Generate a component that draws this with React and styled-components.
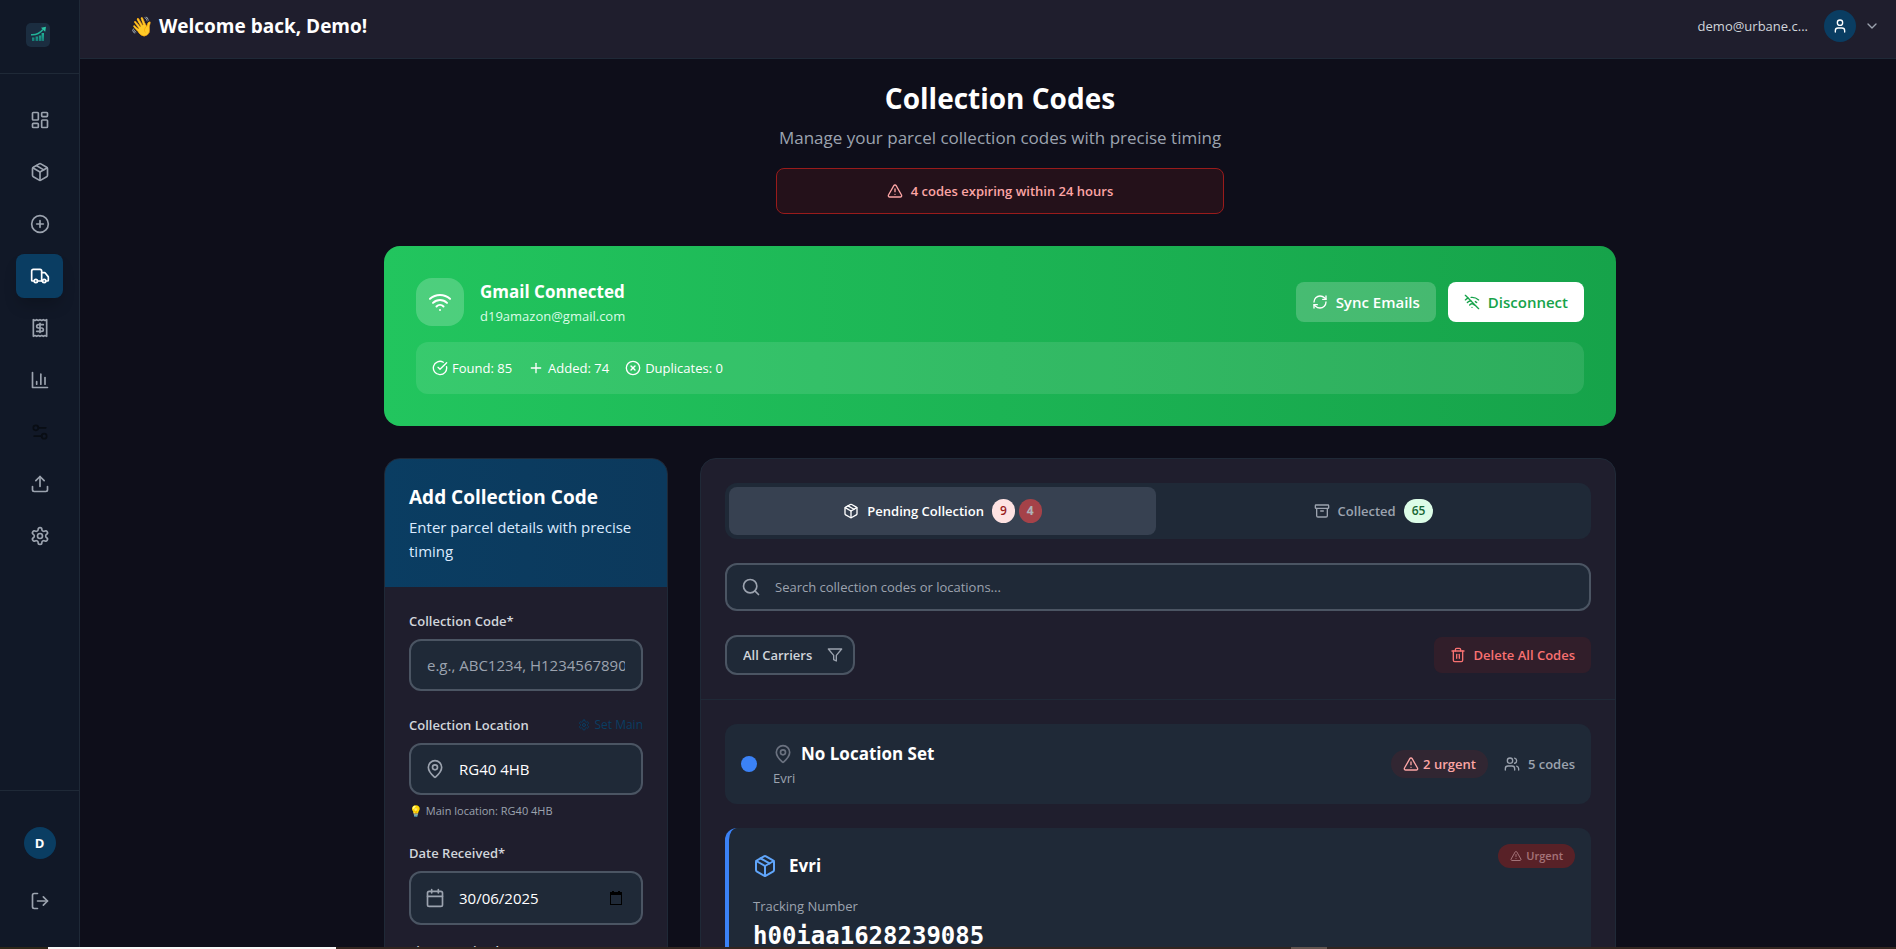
import React, { useState } from 'react';
import styled, { createGlobalStyle, css } from 'styled-components';
import {
  Archive,
  Calendar,
  ChevronDown,
  CircleCheckBig,
  CirclePlus,
  CircleX,
  LayoutDashboard,
  LogOut,
  MapPin,
  Package,
  Plus,
  Receipt,
  RefreshCw,
  Search,
  Settings2,
  Trash2,
  TriangleAlert,
  Truck,
  Upload,
  User,
  Users,
  Wifi,
  WifiOff,
} from 'lucide-react';

const colors = {
  page: '#0e0e1a',
  panel: '#1f1e2d',
  sidebar: '#111827',
  surface: '#1f2937',
  raised: '#374151',
  border: '#1f2937',
  inputBorder: '#4b5563',
  primary: '#0a3d62',
  text: '#ffffff',
  soft: '#d1d5db',
  muted: '#9ca3af',
};

const GlobalStyle = createGlobalStyle`
  *, *::before, *::after {
    box-sizing: border-box;
  }

  body {
    margin: 0;
    background: ${colors.page};
    color: ${colors.text};
    font-family: 'Segoe UI', 'Open Sans', 'Noto Sans', sans-serif;
    font-size: 13px;
    line-height: 20px;
  }

  h1, h2, h3, p {
    margin: 0;
  }

  button, input, select {
    margin: 0;
    padding: 0;
    border: 0;
    background: none;
    color: inherit;
    font: inherit;
  }

  button {
    cursor: pointer;
  }

  svg {
    display: block;
    flex-shrink: 0;
  }
`;

const Shell = styled.div`
  display: flex;
  flex-direction: column;
  height: 100vh;
  overflow: hidden;
`;

const Frame = styled.div`
  display: flex;
  flex: 1;
  min-height: 0;
`;

const TaskbarEdge = styled.div`
  flex-shrink: 0;
  height: 2px;
  background: linear-gradient(
    to right,
    #2e2718 48px, #f7f7f7 48px, #f7f7f7 336px, #32251f 336px,
    #32251f 1291px, #63544d 1291px, #63544d 1327px, #32251f 1327px
  );
`;

/* Sidebar */

const Sidebar = styled.aside`
  display: flex;
  flex-direction: column;
  flex-shrink: 0;
  width: 80px;
  background: ${colors.sidebar};
  border-right: 1px solid ${colors.border};
`;

const LogoArea = styled.div`
  display: flex;
  align-items: center;
  justify-content: center;
  height: 74px;
  padding: 0 4px 4px 0;
  border-bottom: 1px solid ${colors.border};
`;

const Nav = styled.nav`
  display: flex;
  flex: 1;
  flex-direction: column;
  gap: 8px;
  padding: 24px 16px;
`;

const NavLink = styled.a`
  display: flex;
  align-items: center;
  justify-content: center;
  height: 44px;
  border-radius: 8px;
  color: ${props => (props.$dim ? '#090d14' : colors.muted)};

  ${props => props.$active && css`
    background: ${colors.primary};
    color: #fff;
    box-shadow: 0 10px 15px -3px rgba(0, 0, 0, .2);
  `}
`;

const SidebarFooter = styled.div`
  display: flex;
  flex-direction: column;
  align-items: center;
  gap: 8px;
  padding: 24px 16px;
  border-top: 1px solid ${colors.border};
`;

const AvatarSlot = styled.div`
  padding: 12px;
`;

const Avatar = styled.span`
  display: flex;
  align-items: center;
  justify-content: center;
  width: 32px;
  height: 32px;
  border-radius: 50%;
  background: ${colors.primary};
  color: #fff;
  font-weight: 700;
`;

const LogoutButton = styled.button`
  display: flex;
  align-items: center;
  justify-content: center;
  width: 100%;
  height: 44px;
  color: ${colors.muted};
`;

/* Header */

const Content = styled.div`
  flex: 1;
  min-width: 0;
  overflow: hidden;
`;

const Header = styled.header`
  display: flex;
  align-items: center;
  justify-content: space-between;
  padding: 10px 16px 16px 50px;
  background: ${colors.panel};
  border-bottom: 1px solid ${colors.border};
`;

const Greeting = styled.h2`
  font-size: 19px;
  line-height: 28px;
`;

const UserMenu = styled.button`
  display: flex;
  align-items: center;
  gap: 8px;
  color: ${colors.muted};
`;

const UserEmail = styled.span`
  margin-right: 8px;
  color: ${colors.soft};
`;

/* Page */

const Page = styled.main`
  max-width: 1280px;
  margin: 0 auto;
  padding: 21px 24px 24px;
`;

const PageArea = styled.div`
  padding-left: 24px;
`;

const Intro = styled.section`
  display: flex;
  flex-direction: column;
  align-items: center;
  margin-bottom: 32px;
  text-align: center;
`;

const PageTitle = styled.h1`
  font-size: 28px;
  line-height: 36px;
`;

const PageSubtitle = styled.p`
  margin: 8px 0 16px;
  color: ${colors.muted};
  font-size: 17px;
  line-height: 28px;
`;

const ExpiryAlert = styled.div`
  display: flex;
  align-items: center;
  justify-content: center;
  gap: 8px;
  width: 100%;
  max-width: 448px;
  padding: 12px 16px;
  border: 1px solid #991b1b;
  border-radius: 8px;
  background: rgba(127, 29, 29, .2);
  color: #fca5a5;
  font-weight: 600;
`;

/* Gmail banner */

const Banner = styled.section`
  display: flex;
  flex-direction: column;
  gap: 16px;
  margin-bottom: 32px;
  padding: 32px;
  border-radius: 16px;
  background: linear-gradient(to right, #22c55e, #16a34a);
`;

const BannerRow = styled.div`
  display: flex;
  align-items: center;
  gap: 16px;
`;

const BannerIcon = styled.div`
  display: flex;
  align-items: center;
  justify-content: center;
  width: 48px;
  height: 48px;
  border-radius: 16px;
  background: rgba(255, 255, 255, .2);
`;

const BannerText = styled.div`
  flex: 1;
`;

const BannerTitle = styled.h3`
  font-size: 17px;
  line-height: 28px;
`;

const BannerEmail = styled.p`
  color: #dcfce7;
`;

const BannerActions = styled.div`
  display: flex;
  gap: 12px;
`;

const BannerButton = styled.button`
  display: flex;
  align-items: center;
  gap: 8px;
  height: 40px;
  padding: 0 16px;
  border-radius: 8px;
  background: ${props => (props.$solid ? '#fff' : 'rgba(255, 255, 255, .2)')};
  color: ${props => (props.$solid ? '#16a34a' : '#fff')};
  font-size: 15px;
  font-weight: 600;
`;

const SyncStats = styled.ul`
  display: flex;
  gap: 16px;
  margin: 0;
  padding: 16px;
  border-radius: 12px;
  background: rgba(255, 255, 255, .1);
  list-style: none;
`;

const SyncStat = styled.li`
  display: flex;
  align-items: center;
  gap: 4px;
`;

/* Columns */

const Columns = styled.div`
  display: grid;
  grid-template-columns: repeat(4, minmax(0, 1fr));
  gap: 32px;
  align-items: start;
`;

const Panel = styled.section`
  grid-column: span ${props => props.$span || 1};
  overflow: hidden;
  border: 1px solid ${colors.border};
  border-radius: 16px;
  background: ${colors.panel};
`;

/* Form */

const FormHeader = styled.div`
  padding: 24px;
  background: linear-gradient(to right, #0a3d62, #0c395c);
`;

const FormTitle = styled.h2`
  font-size: 19px;
  line-height: 28px;
`;

const FormSubtitle = styled.p`
  margin-top: 4px;
  color: #dbeafe;
  font-size: 15px;
  line-height: 24px;
`;

const Form = styled.form`
  display: flex;
  flex-direction: column;
  gap: 24px;
  padding: 24px;
`;

const FieldGroup = styled.div`
  display: flex;
  flex-direction: column;
  gap: 16px;
`;

const Field = styled.div`
  display: flex;
  flex-direction: column;
  gap: 8px;
`;

const FieldHead = styled.div`
  display: flex;
  align-items: center;
  justify-content: space-between;
`;

const Label = styled.label`
  color: ${colors.soft};
  font-weight: 600;
`;

const SetMainButton = styled.button`
  display: flex;
  align-items: center;
  gap: 4px;
  color: ${colors.primary};
  font-size: 12px;
`;

const InputBox = styled.div`
  display: flex;
  align-items: center;
  gap: 14px;
  height: ${props => props.$height || 52}px;
  padding: 0 ${props => (props.$withIcon ? 14 : 16)}px;
  border: 2px solid ${colors.inputBorder};
  border-radius: 12px;
  background: ${colors.surface};
  color: ${colors.muted};
`;

const TextInput = styled.input`
  flex: 1;
  width: 100%;
  min-width: 0;
  outline: none;
  color: #fff;
  font-size: ${props => props.$size || 15}px;

  &::placeholder {
    color: ${colors.muted};
    opacity: 1;
  }
`;

const PickerButton = styled.button`
  padding-right: 4px;
  color: #000;
`;

const Hint = styled.p`
  color: ${colors.muted};
  font-size: 11px;
  line-height: 16px;
`;

/* Codes panel */

const Toolbar = styled.div`
  display: flex;
  flex-direction: column;
  gap: 24px;
  padding: 24px;
  border-bottom: 1px solid ${colors.border};
`;

const Tabs = styled.div`
  display: grid;
  grid-template-columns: 1fr 1fr;
  gap: 4px;
  padding: 4px;
  border-radius: 12px;
  background: ${colors.surface};
`;

const Tab = styled.button`
  display: flex;
  align-items: center;
  justify-content: center;
  gap: 8px;
  height: 48px;
  border-radius: 8px;
  background: ${props => (props.$active ? colors.raised : 'transparent')};
  color: ${props => (props.$active ? '#fff' : colors.muted)};
  font-weight: 600;
`;

const badgeTones = {
  red: css`
    background: #fee2e2;
    color: #991b1b;
  `,
  urgent: css`
    background: #ef4444;
    color: #fff;
    font-weight: 700;
    opacity: .6;
  `,
  green: css`
    background: #dcfce7;
    color: #166534;
  `,
};

const BadgeGroup = styled.span`
  display: flex;
  gap: 4px;
`;

const Badge = styled.span`
  padding: 4px 8px;
  border-radius: 12px;
  font-size: 12px;
  line-height: 16px;
  ${props => badgeTones[props.$tone]}
`;

const SearchBox = styled(InputBox)`
  height: 48px;
`;

const FilterRow = styled.div`
  display: flex;
  align-items: center;
  justify-content: space-between;
`;

const CarrierFilter = styled.div`
  display: flex;
  align-items: center;
  gap: 12px;
  width: 130px;
  height: 40px;
  padding: 0 10px 0 16px;
  border: 2px solid ${colors.inputBorder};
  border-radius: 12px;
  background: ${colors.surface};
  color: ${colors.muted};
`;

const CarrierSelect = styled.select`
  flex: 1;
  min-width: 0;
  appearance: none;
  outline: none;
  color: ${colors.soft};
  font-weight: 600;
`;

const DeleteButton = styled.button`
  display: flex;
  align-items: center;
  gap: 8px;
  height: 36px;
  padding: 0 16px;
  border-radius: 8px;
  background: rgba(127, 29, 29, .2);
  color: #f87171;
  font-weight: 600;
`;

const CodeList = styled.div`
  display: flex;
  flex-direction: column;
  gap: 24px;
  padding: 24px;
`;

const GroupHeader = styled.div`
  display: flex;
  align-items: center;
  gap: 16px;
  padding: 16px;
  border-radius: 12px;
  background: ${colors.surface};
`;

const Dot = styled.span`
  width: 16px;
  height: 16px;
  border-radius: 50%;
  background: #3b82f6;
`;

const GroupInfo = styled.div`
  flex: 1;
`;

const GroupTitle = styled.h3`
  display: flex;
  align-items: center;
  gap: 8px;
  font-size: 17px;
  line-height: 28px;

  svg {
    color: #6b7280;
  }
`;

const MutedText = styled.p`
  color: ${colors.muted};
`;

const UrgentPill = styled.span`
  display: flex;
  align-items: center;
  gap: 4px;
  padding: 4px 12px;
  border-radius: 14px;
  background: rgba(127, 29, 29, .2);
  color: #fca5a5;
  font-weight: 600;
`;

const CodeCount = styled.span`
  display: flex;
  align-items: center;
  gap: 8px;
  color: ${colors.muted};
  font-weight: 600;
`;

const CodeCard = styled.article`
  position: relative;
  padding: 24px;
  border-left: 4px solid #3b82f6;
  border-radius: 12px;
  background: ${colors.surface};
`;

const CardTag = styled.span`
  position: absolute;
  top: 16px;
  right: 16px;
  display: flex;
  align-items: center;
  gap: 4px;
  padding: 4px 12px;
  border-radius: 12px;
  background: #7f1d1d;
  color: #fca5a5;
  font-size: 11px;
  font-weight: 600;
  line-height: 16px;
  opacity: .6;
`;

const CardTitle = styled.h3`
  display: flex;
  align-items: center;
  gap: 12px;
  margin-bottom: 16px;
  font-size: 17px;
  line-height: 28px;

  svg {
    color: #60a5fa;
  }
`;

const TrackingNumber = styled.p`
  margin-top: 4px;
  font-family: Consolas, 'DejaVu Sans Mono', monospace;
  font-size: 24px;
  font-weight: 700;
  line-height: 32px;
`;

/* Icons */

const Stroke = ({ size = 20, children }) => (
  <svg
    width={size}
    height={size}
    viewBox="0 0 24 24"
    fill="none"
    stroke="currentColor"
    strokeWidth="2"
    strokeLinecap="round"
    strokeLinejoin="round"
    aria-hidden="true"
  >
    {children}
  </svg>
);

const ChartIcon = props => (
  <Stroke {...props}>
    <path d="M3 3v18h18" />
    <path d="M18 17V9" />
    <path d="M13 17V5" />
    <path d="M8 17v-3" />
  </Stroke>
);

const GearIcon = props => (
  <Stroke {...props}>
    <path d="M12.22 2h-.44a2 2 0 0 0-2 2v.18a2 2 0 0 1-1 1.73l-.43.25a2 2 0 0 1-2 0l-.15-.08a2 2 0 0 0-2.73.73l-.22.38a2 2 0 0 0 .73 2.73l.15.1a2 2 0 0 1 1 1.72v.51a2 2 0 0 1-1 1.74l-.15.09a2 2 0 0 0-.73 2.73l.22.38a2 2 0 0 0 2.73.73l.15-.08a2 2 0 0 1 2 0l.43.25a2 2 0 0 1 1 1.73V20a2 2 0 0 0 2 2h.44a2 2 0 0 0 2-2v-.18a2 2 0 0 1 1-1.73l.43-.25a2 2 0 0 1 2 0l.15.08a2 2 0 0 0 2.73-.73l.22-.39a2 2 0 0 0-.73-2.73l-.15-.08a2 2 0 0 1-1-1.74v-.5a2 2 0 0 1 1-1.74l.15-.09a2 2 0 0 0 .73-2.73l-.22-.38a2 2 0 0 0-2.73-.73l-.15.08a2 2 0 0 1-2 0l-.43-.25a2 2 0 0 1-1-1.73V4a2 2 0 0 0-2-2z" />
    <circle cx="12" cy="12" r="3" />
  </Stroke>
);

const FunnelIcon = props => (
  <Stroke {...props}>
    <path d="M22 3H2l8 9.46V19l4 2v-8.54L22 3z" />
  </Stroke>
);

const PickerIcon = () => (
  <svg width="14" height="16" viewBox="0 0 14 16" aria-hidden="true">
    <path d="M3 1h2v1h4V1h2v1h2v13H1V2h2zM2 5v9h10V5z" fill="currentColor" fillRule="evenodd" />
  </svg>
);

const Logo = () => (
  <svg width="24" height="24" viewBox="0 0 24 24" role="img" aria-label="Urbane">
    <defs>
      <linearGradient id="logo-bars" x1="0" y1="0" x2="0" y2="1">
        <stop offset="0" stopColor="#22b398" />
        <stop offset="1" stopColor="#157a75" />
      </linearGradient>
    </defs>
    <rect width="24" height="24" rx="5" fill="#1b2d40" />
    <path
      d="M6 14.500h2.400V18H6zM9.600 13.500h2.400V18H9.600zM12.800 12.500h2.400V18h-2.400zM15.600 10H18v8h-2.400z"
      fill="url(#logo-bars)"
    />
    <path d="M5 11.800c5 .4 8.500-1 12-5.300" fill="none" stroke="#22b398" strokeWidth="1.500" />
    <path d="M15 4.800l5-1-.8 5z" fill="#2cc2a4" />
  </svg>
);

const navItems = [
  { name: 'Dashboard', icon: LayoutDashboard },
  { name: 'Inventory', icon: Package },
  { name: 'Add item', icon: CirclePlus },
  { name: 'Collections', icon: Truck, active: true },
  { name: 'Sales', icon: Receipt },
  { name: 'Analytics', icon: ChartIcon },
  { name: 'Preferences', icon: Settings2, dim: true },
  { name: 'Import', icon: Upload },
  { name: 'Settings', icon: GearIcon },
];

const syncStats = [
  { label: 'Found', value: 85, icon: CircleCheckBig },
  { label: 'Added', value: 74, icon: Plus },
  { label: 'Duplicates', value: 0, icon: CircleX },
];

const AddCodeForm = () => (
  <Panel>
    <FormHeader>
      <FormTitle>Add Collection Code</FormTitle>
      <FormSubtitle>Enter parcel details with precise timing</FormSubtitle>
    </FormHeader>
    <Form>
      <Field>
        <Label htmlFor="code">Collection Code*</Label>
        <InputBox>
          <TextInput id="code" placeholder="e.g., ABC1234, H1234567890123" />
        </InputBox>
      </Field>
      <Field>
        <FieldHead>
          <Label htmlFor="location">Collection Location</Label>
          <SetMainButton type="button">
            <GearIcon size={12} />
            Set Main
          </SetMainButton>
        </FieldHead>
        <InputBox $withIcon>
          <MapPin size={20} />
          <TextInput id="location" defaultValue="RG40 4HB" />
        </InputBox>
        <Hint>💡 Main location: RG40 4HB</Hint>
      </Field>
      <FieldGroup>
        <Field>
          <Label htmlFor="date">Date Received*</Label>
          <InputBox $withIcon $height={54}>
            <Calendar size={20} />
            <TextInput id="date" defaultValue="30/06/2025" />
            <PickerButton type="button" aria-label="Choose date">
              <PickerIcon />
            </PickerButton>
          </InputBox>
        </Field>
        <Field>
          <Label htmlFor="time">Time Received</Label>
          <InputBox $height={54}>
            <TextInput id="time" />
          </InputBox>
        </Field>
      </FieldGroup>
    </Form>
  </Panel>
);

const CodesPanel = () => {
  const [tab, setTab] = useState('pending');

  return (
    <Panel $span={3}>
      <Toolbar>
        <Tabs>
          <Tab $active={tab === 'pending'} onClick={() => setTab('pending')}>
            <Package size={16} />
            Pending Collection
            <BadgeGroup>
              <Badge $tone="red">9</Badge>
              <Badge $tone="urgent">4</Badge>
            </BadgeGroup>
          </Tab>
          <Tab $active={tab === 'collected'} onClick={() => setTab('collected')}>
            <Archive size={16} />
            Collected
            <Badge $tone="green">65</Badge>
          </Tab>
        </Tabs>
        <SearchBox $withIcon>
          <Search size={20} />
          <TextInput
            $size={13}
            type="search"
            aria-label="Search"
            placeholder="Search collection codes or locations..."
          />
        </SearchBox>
        <FilterRow>
          <CarrierFilter>
            <CarrierSelect aria-label="Carrier">
              <option>All Carriers</option>
              <option>Evri</option>
            </CarrierSelect>
            <FunnelIcon size={16} />
          </CarrierFilter>
          <DeleteButton>
            <Trash2 size={16} />
            Delete All Codes
          </DeleteButton>
        </FilterRow>
      </Toolbar>
      <CodeList>
        <GroupHeader>
          <Dot />
          <GroupInfo>
            <GroupTitle>
              <MapPin size={20} />
              No Location Set
            </GroupTitle>
            <MutedText>Evri</MutedText>
          </GroupInfo>
          <UrgentPill>
            <TriangleAlert size={16} />
            2 urgent
          </UrgentPill>
          <CodeCount>
            <Users size={16} />
            5 codes
          </CodeCount>
        </GroupHeader>
        <CodeCard>
          <CardTag>
            <TriangleAlert size={12} />
            Urgent
          </CardTag>
          <CardTitle>
            <Package size={24} />
            Evri
          </CardTitle>
          <MutedText>Tracking Number</MutedText>
          <TrackingNumber>h00iaa1628239085</TrackingNumber>
        </CodeCard>
      </CodeList>
    </Panel>
  );
};

export default function App() {
  return (
    <Shell>
      <GlobalStyle />
      <Frame>
        <Sidebar>
          <LogoArea>
            <Logo />
          </LogoArea>
          <Nav>
            {navItems.map(({ name, icon: Icon, active, dim }) => (
              <NavLink key={name} href="#" aria-label={name} $active={active} $dim={dim}>
                <Icon size={20} />
              </NavLink>
            ))}
          </Nav>
          <SidebarFooter>
            <AvatarSlot>
              <Avatar>D</Avatar>
            </AvatarSlot>
            <LogoutButton aria-label="Log out">
              <LogOut size={20} />
            </LogoutButton>
          </SidebarFooter>
        </Sidebar>
        <Content>
          <Header>
            <Greeting>👋 Welcome back, Demo!</Greeting>
            <UserMenu>
              <UserEmail>demo@urbane.c...</UserEmail>
              <Avatar>
                <User size={16} />
              </Avatar>
              <ChevronDown size={16} />
            </UserMenu>
          </Header>
          <PageArea>
            <Page>
              <Intro>
                <PageTitle>Collection Codes</PageTitle>
                <PageSubtitle>Manage your parcel collection codes with precise timing</PageSubtitle>
                <ExpiryAlert>
                  <TriangleAlert size={16} />
                  4 codes expiring within 24 hours
                </ExpiryAlert>
              </Intro>
              <Banner>
                <BannerRow>
                  <BannerIcon>
                    <Wifi size={24} />
                  </BannerIcon>
                  <BannerText>
                    <BannerTitle>Gmail Connected</BannerTitle>
                    <BannerEmail>d19amazon@gmail.com</BannerEmail>
                  </BannerText>
                  <BannerActions>
                    <BannerButton>
                      <RefreshCw size={16} />
                      Sync Emails
                    </BannerButton>
                    <BannerButton $solid>
                      <WifiOff size={16} />
                      Disconnect
                    </BannerButton>
                  </BannerActions>
                </BannerRow>
                <SyncStats>
                  {syncStats.map(({ label, value, icon: Icon }) => (
                    <SyncStat key={label}>
                      <Icon size={16} />
                      {`${label}: ${value}`}
                    </SyncStat>
                  ))}
                </SyncStats>
              </Banner>
              <Columns>
                <AddCodeForm />
                <CodesPanel />
              </Columns>
            </Page>
          </PageArea>
        </Content>
      </Frame>
      <TaskbarEdge />
    </Shell>
  );
}
